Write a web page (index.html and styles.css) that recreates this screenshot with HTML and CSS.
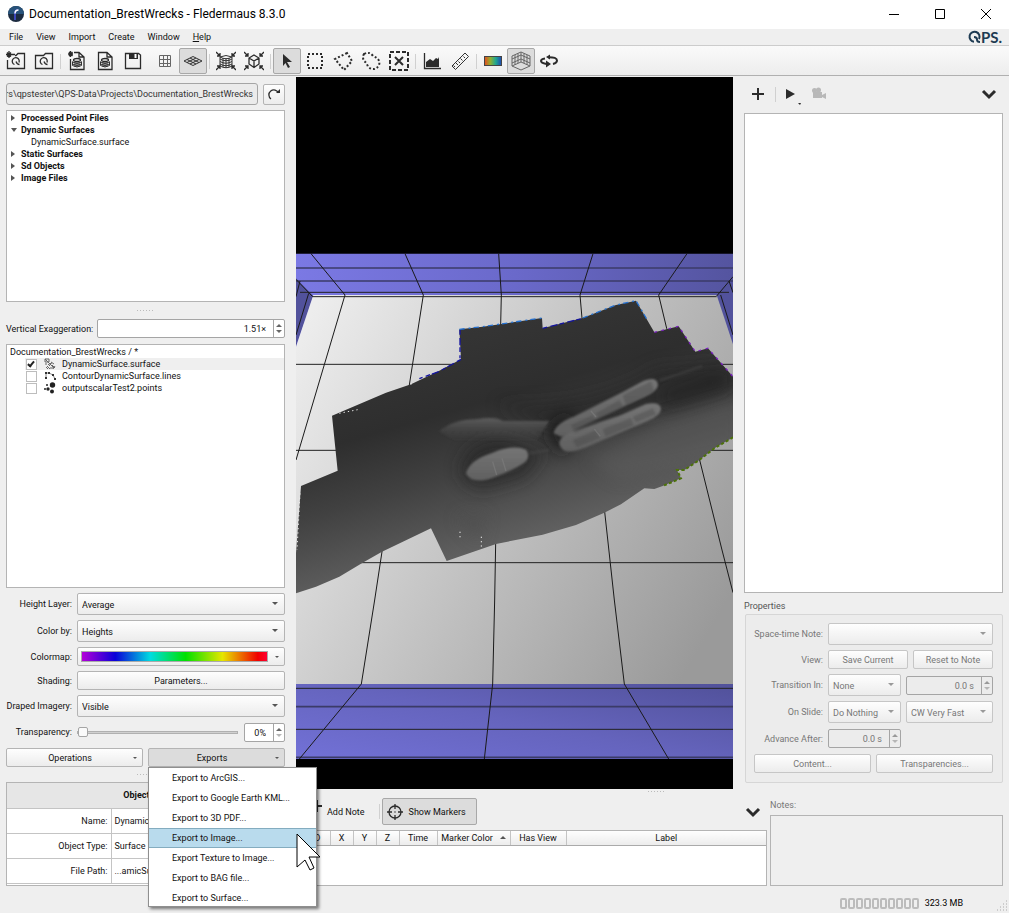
FILE: index.html
```html
<!DOCTYPE html>
<html lang="en">
<head>
    <meta charset="UTF-8">
    <meta name="viewport" content="width=device-width, initial-scale=1.0">
    <title>Documentation_BrestWrecks - Fledermaus 8.3.0</title>
    <link rel="stylesheet" href="styles.css">
</head>
<body>
    <header class="titlebar">
        <svg class="app-icon" width="16" height="16" viewBox="0 0 16 16">
            <circle cx="8" cy="8" r="8" fill="#1c2b40"/>
            <path d="M0 8a8 8 0 0 1 16 0z" fill="#27527a"/>
            <path d="M7 14V7q0-3 3-3" fill="none" stroke="#3c46b8" stroke-width="2"/>
            <path d="M7 7.500q0-3.500 3.500-3.500" fill="none" stroke="#fff" stroke-width="1.500"/>
        </svg>
        <h1>Documentation_BrestWrecks - Fledermaus 8.3.0</h1>
        <div class="window-buttons">
            <button aria-label="Minimize"><svg width="12" height="12"><path d="M1 6.500h10" stroke="#000"/></svg></button>
            <button aria-label="Maximize"><svg width="12" height="12"><path d="M1.500 1.500h9v9h-9z" fill="none" stroke="#000"/></svg></button>
            <button aria-label="Close"><svg width="12" height="12"><path d="M1 1l10 10M11 1L1 11" stroke="#000"/></svg></button>
        </div>
    </header>

    <nav class="menubar">
        <button>File</button>
        <button>View</button>
        <button>Import</button>
        <button>Create</button>
        <button>Window</button>
        <button><u>H</u>elp</button>
        <svg class="brand" width="41" height="16" viewBox="0 0 41 16">
            <path d="M6 12.700A5 5 0 1 1 11 10M6 8q3 0 3 2.500t3 2.500" fill="none" stroke="#1d3a52" stroke-width="2"/>
            <text x="13" y="14">PS.</text>
        </svg>
    </nav>

    <div class="toolbar">
        <button aria-label="New project"><svg width="20" height="20" viewBox="0 0 20 20"><path d="M6 3.500h3M9 4.500h1l2-2h6.500v15h-17V9M8.500 13.500a3.500 3.500 0 1 1 4.500-2M10 10.500q1 3 3.500 3" class="line"/><path d="M3 0v7M0 3.500h6M1 1.500l4 4M5 1.500l-4 4" class="line"/></svg></button>
        <button aria-label="Open project"><svg width="20" height="20" viewBox="0 0 20 20"><path d="M1.500 4.500h8l2-2h7v15h-17zM8.500 13.500a3.500 3.500 0 1 1 4.500-2M10 10.500q1 3 3.500 3" class="line"/></svg></button>
        <span class="sep"></span>
        <button aria-label="Create surface"><svg width="20" height="20" viewBox="0 0 20 20"><path d="M7 1.500h5l5 4.500v12.500H3.500V8M12 1.500V6h5" class="line"/><ellipse cx="10" cy="9" rx="3.500" ry="1.500" class="line"/><path d="M5.500 10.500v4q4.500 3 9 0v-4M5.500 11q4.500 3 9 0M5.500 13q4.500 3 9 0M8 11v5M10 11v5M12 11v5" class="thin dark"/><path d="M3.500 0v6M1 3h5M2 1l3.500 4M5.500 1L2 5" class="line"/></svg></button>
        <button aria-label="Import surface"><svg width="20" height="20" viewBox="0 0 20 20"><path d="M3.500 1.500H12L17 6v12.500H3.500zM12 1.500V6h5" class="line"/><ellipse cx="10" cy="9" rx="3.500" ry="1.500" class="line"/><path d="M5.500 10.500v4q4.500 3 9 0v-4M5.500 11q4.500 3 9 0M5.500 13q4.500 3 9 0M8 11v5M10 11v5M12 11v5" class="thin dark"/></svg></button>
        <button aria-label="Save"><svg width="20" height="20" viewBox="0 0 20 20"><path d="M3 2.500h12.500L17.500 4v13.500h-15V2.500z" class="line"/><path d="M6 2h9v6H6z" class="solid"/><path d="M11.500 3h2v4h-2z" fill="#fff"/></svg></button>
        <span class="space"></span>
        <button aria-label="Grid"><svg width="20" height="20" viewBox="0 0 20 20"><path d="M4.500 4.500h11v11h-11zM8.500 4.500v11M12.500 4.500v11M4.500 8.500h11M4.500 12.500h11" class="thin"/></svg></button>
        <button class="pressed" aria-label="Perspective grid"><svg width="20" height="20" viewBox="0 0 20 20"><path d="M1 10l9-4.500L19 10l-9 4.500zM4 8.500l9 4.500M7 7l9 4.500M4 11.500L13 7M7 13l9-4.500" class="thin dark"/></svg></button>
        <span class="sep"></span>
        <button aria-label="Zoom extents"><svg width="20" height="20" viewBox="0 0 20 20"><path d="M4 6q6 3.500 12 0v9q-6 3.500-12 0zM4 6q6-3 12 0M4 8q6 3.500 12 0M4 10.500q6 3.500 12 0M4 13q6 3.500 12 0M7 7v9M10 7v10M13 7v9" class="thin dark"/><path d="M0 1l4 4M20 1l-4 4M0 19l4-4M20 19l-4-4M1 5h3V2M19 5h-3V2M1 15h3v3M19 15h-3v3" class="line"/></svg></button>
        <button aria-label="Zoom to object"><svg width="20" height="20" viewBox="0 0 20 20"><path d="M10 4l5 3v6l-5 3.500L5 13V7zM5 7l5 3 5-3M10 10v6" class="line"/><path d="M0 1l4 4M20 1l-4 4M0 19l4-4M20 19l-4-4M1 5h3V2M19 5h-3V2M1 15h3v3M19 15h-3v3" class="line"/></svg></button>
        <span class="sep"></span>
        <button class="pressed" aria-label="Select"><svg width="20" height="20" viewBox="0 0 20 20"><path d="M6 3l9 8h-5l3 5-2 1-2.500-5L6 15z" class="solid"/></svg></button>
        <button aria-label="Select rectangle"><svg width="20" height="20" viewBox="0 0 20 20"><path d="M3 3h14v14H3z" class="dots"/></svg></button>
        <button aria-label="Select polygon"><svg width="20" height="20" viewBox="0 0 20 20"><path d="M14 2L2 8l9 11 8-9z" class="dots"/></svg></button>
        <button aria-label="Select lasso"><svg width="20" height="20" viewBox="0 0 20 20"><path d="M3 3q6-3 9 2 8 3 6 9-4 7-11 2-1-4-4-6-2-4 0-7z" class="dots"/></svg></button>
        <button aria-label="Clear selection"><svg width="20" height="20" viewBox="0 0 20 20"><path d="M1 1h18v18H1z" class="dots dash"/><path d="M6 6l8 8M14 6l-8 8" class="line bold"/></svg></button>
        <span class="sep"></span>
        <button aria-label="Profile"><svg width="20" height="20" viewBox="0 0 20 20"><path d="M2.500 2v15.500H19" class="line"/><path d="M4 16v-5l4-3 3 2 3-3 2 1 1-2v10z" class="solid"/></svg></button>
        <button aria-label="Measure"><svg width="20" height="20" viewBox="0 0 20 20"><path d="M2 15L15 2l3.500 3.500L5.500 18.500zM5 16l-1.500-1.500M8 14l-2-2M10 12l-1.500-1.500M12.500 9.500l-2-2M15 7l-1.500-1.500" class="thin dark"/></svg></button>
        <span class="sep"></span>
        <button aria-label="Colormap"><span class="swatch"></span></button>
        <button class="pressed" aria-label="Bounding box"><svg width="20" height="20" viewBox="0 0 20 20"><path d="M1 5l9-4 9 4v10l-9 4-9-4zM1 15l9-4 9 4M10 1v10M4 4v10M7 2.500V12M16 4v10M13 2.500V12M1 8l9-4 9 4M1 12l9-4 9 4" class="thin"/></svg></button>
        <button aria-label="Spin"><svg width="20" height="20" viewBox="0 0 20 20"><path d="M6 7.500Q2 8 2 10t5.500 3M9 6.200q9-.200 9 3.300 0 2.500-4 3.500" class="line bold"/><path d="M7 9.500v7l5-3.500zM11 3.500v5L7 6z" class="solid"/></svg></button>
    </div>

    <div class="workspace">
        <aside class="left-panel">
            <div class="path-row">
                <input class="path" type="text" aria-label="Project path" value="ers\qpstester\QPS-Data\Projects\Documentation_BrestWrecks" readonly>
                <button class="btn refresh" aria-label="Refresh"><svg width="14" height="14" viewBox="0 0 14 14"><path d="M4 12A5 5 0 1 1 11.500 6" class="line"/><path d="M9 6h4V2z" class="solid"/></svg></button>
            </div>

            <ul class="box tree project-tree">
                <li class="closed">Processed Point Files</li>
                <li class="open">Dynamic Surfaces</li>
                <li class="leaf">DynamicSurface.surface</li>
                <li class="closed">Static Surfaces</li>
                <li class="closed">Sd Objects</li>
                <li class="closed">Image Files</li>
            </ul>

            <div class="splitter"><i></i></div>

            <div class="exaggeration">
                <label for="exaggeration">Vertical Exaggeration:</label>
                <div class="spin">
                    <input type="text" id="exaggeration" value="1.51×">
                    <div class="steps"><button aria-label="Increase"></button><button class="down" aria-label="Decrease"></button></div>
                </div>
            </div>

            <div class="box tree scene-tree">
                <p>Documentation_BrestWrecks / *</p>
                <label class="layer selected"><input type="checkbox" checked>
                    <svg width="12" height="12" viewBox="0 0 12 12"><path d="M1 1h4v3H1zM1 6h2M4 6l2 2M7 4l3 2M3 8l3 3M8 7l3 3M9 11l2-3M5 6l3-1M2 9l2 2M6 10h3M1 1l9 9" stroke="#666" fill="none"/></svg>
                    DynamicSurface.surface</label>
                <label class="layer"><input type="checkbox">
                    <svg width="12" height="12" viewBox="0 0 12 12"><path d="M2 9V3h3l2 1 2 1 2 4" fill="none" stroke="#888"/><path d="M1 2h2v2H1zM4 2h2v2H4zM8 4h2v2H8zM10 8h2v2h-2zM1 7h2v2H1z" fill="#333"/></svg>
                    ContourDynamicSurface.lines</label>
                <label class="layer"><input type="checkbox">
                    <svg width="12" height="12" viewBox="0 0 12 12" fill="#222"><circle cx="8.500" cy="3" r="2.700"/><circle cx="4" cy="7" r="1.700"/><circle cx="8" cy="9.500" r="2"/><circle cx="3" cy="3" r="1"/><circle cx="1" cy="7" r="1"/></svg>
                    outputscalarTest2.points</label>
            </div>

            <div class="form">
                <label for="height">Height Layer:</label>
                <div class="combo"><select id="height"><option>Average</option></select></div>
                <label for="colorby">Color by:</label>
                <div class="combo"><select id="colorby"><option>Heights</option></select></div>
                <label for="colormap">Colormap:</label>
                <button class="btn drop colormap" id="colormap"><span class="spectrum"></span></button>
                <label for="shading">Shading:</label>
                <button class="btn" id="shading">Parameters...</button>
                <label for="draped">Draped Imagery:</label>
                <div class="combo"><select id="draped"><option>Visible</option></select></div>
                <label for="transparency">Transparency:</label>
                <div class="slide-row">
                    <input type="range" id="transparency" value="0">
                    <div class="spin">
                        <input type="text" aria-label="Transparency percent" value="0%">
                        <div class="steps"><button aria-label="Increase"></button><button class="down dim" aria-label="Decrease"></button></div>
                    </div>
                </div>
            </div>

            <div class="actions">
                <button class="btn drop">Operations</button>
                <div class="export">
                    <button class="btn drop active">Exports</button>
                    <div class="popup">
                        <button>Export to ArcGIS...</button>
                        <button>Export to Google Earth KML...</button>
                        <button>Export to 3D PDF...</button>
                        <button class="hover">Export to Image...</button>
                        <button>Export Texture to Image...</button>
                        <button>Export to BAG file...</button>
                        <button>Export to Surface...</button>
                        <svg class="cursor" width="26" height="40" viewBox="0 0 26 40"><path d="M1 1v33l8-7 5 10 4-2-5-11h11z" fill="#fff" stroke="#000"/></svg>
                    </div>
                </div>
            </div>

            <div class="splitter short"><i></i></div>

            <div class="box attributes">
                <table>
                    <colgroup><col class="c-name"><col></colgroup>
                    <thead>
                        <tr><th colspan="2">Object Info</th></tr>
                    </thead>
                    <tbody>
                        <tr><td>Name:</td><td>DynamicSurface</td></tr>
                        <tr><td>Object Type:</td><td>Surface</td></tr>
                        <tr><td>File Path:</td><td>...amicSurface</td></tr>
                    </tbody>
                </table>
            </div>
        </aside>

        <div class="main">
            <div class="upper">
                <svg class="scene" viewBox="0 -489 1311 2136" preserveAspectRatio="xMidYMid slice">
                    <defs>
                        <linearGradient id="wall" gradientUnits="userSpaceOnUse" x1="0" y1="100" x2="1311" y2="200">
                            <stop offset="0" stop-color="#7b79e4"/><stop offset=".5" stop-color="#6a69ca"/><stop offset="1" stop-color="#54549f"/>
                        </linearGradient>
                        <linearGradient id="front" gradientUnits="userSpaceOnUse" x1="0" y1="1557" x2="96" y2="1085">
                            <stop offset="0" stop-color="#7271d7"/><stop offset=".5" stop-color="#6564bd"/><stop offset="1" stop-color="#51519a"/>
                        </linearGradient>
                        <linearGradient id="floor" gradientUnits="userSpaceOnUse" x1="0" y1="300" x2="1311" y2="1050">
                            <stop offset="0" stop-color="#ededed"/><stop offset=".5" stop-color="#c3c3c3"/><stop offset="1" stop-color="#9a9a9a"/>
                        </linearGradient>
                        <linearGradient id="seabed" gradientUnits="userSpaceOnUse" x1="430" y1="250" x2="640" y2="970">
                            <stop offset="0" stop-color="#363636"/><stop offset=".35" stop-color="#2e2e2e"/><stop offset=".6" stop-color="#414141"/><stop offset="1" stop-color="#676767"/>
                        </linearGradient>
                        <linearGradient id="hull" x1="0" y1="0" x2="0" y2="1">
                            <stop offset="0" stop-color="#757575"/><stop offset="1" stop-color="#606060"/>
                        </linearGradient>
                        <linearGradient id="mound" x1="0" y1="0" x2="0" y2="1">
                            <stop offset="0" stop-color="#5d5d5d"/><stop offset=".8" stop-color="#444" stop-opacity="0"/>
                        </linearGradient>
                        <filter id="soft" x="-50%" y="-50%" width="200%" height="200%"><feGaussianBlur stdDeviation="24"/></filter>
                        <filter id="edge" x="-10%" y="-50%" width="120%" height="200%"><feGaussianBlur stdDeviation="3"/></filter>
                        <clipPath id="area"><use href="#outline"/></clipPath>
                    </defs>
                    <path d="M0-489h1311v2136H0z"/>
                    <path d="M0 41h1311v300H0z" fill="url(#wall)"/>
                    <path d="M0 115l52 53L0 320zM1311 115l-50 53 50 145z" fill="#52529c"/>
                    <path d="M52 165h1210l49 148v1019H0V320z" fill="url(#floor)"/>
                    <path d="M0 1332h1311v225H0z" fill="url(#front)"/>
                    <!-- wall and floor grid -->
                    <path d="M0 84h1311M0 123h1311M0 1400h1311M0 1552h1311" fill="none" stroke="#3b3b68" stroke-width="5"/>
                    <path d="M12 157h1287M50 170h1212M0 373h1311M0 631h1311M0 968h1311M0 1345h1311M0 1468h1311" fill="none" stroke="#222" stroke-width="3"/>
                    <path d="M45 41l102 124L0 660M327 41l55 124-42 270-82 500-22 145-40 252L10 1557M608 41l8 124-17 745-3 170-6 252-25 225M891 41l-39 124 6 70 68 580 29 265 30 252 133 225M1173 41l-85 124 24 100 99 395 67 270 33 128M0 118l50 52M12 123L0 170M38 160L0 285M1311 110l-49 58M1299 123l12 35M1274 165l37 120" fill="none" stroke="#1a1a1a" stroke-width="3"/>
                    <path id="outline" d="M490 268l70-8 178-26 2 31 120-31 100-39 60-13 55 95 73-18 50 76 38-10 75 85v182l-56 33-45 35-45 30h-22l12 25-55 23-25 9-30-2-70 48-50 25-85 37-100 29-140 28-148 51-47-98-147 70-58 33-70 42-70 30-60 20V940l15-202 110-46-17-165 162-69 75-25 85-41 65-34z" fill="url(#seabed)"/>
                    <g clip-path="url(#area)">
                        <path d="M600 490q300 10 480-110l240-20v90q-260 90-560 130z" fill="#222" opacity=".5" filter="url(#soft)"/>
                        <path d="M1100 540l240-80v180l-380 80-80-60z" fill="#666" opacity=".35" filter="url(#soft)"/>
                        <path d="M490 690q10-90 130-95l130 40-60 80-120 35q-70 0-80-60z" fill="#222" opacity=".6" filter="url(#soft)"/>
                        <path d="M745 580l70-70 20 100-40 40z" fill="#151515" opacity=".7" filter="url(#soft)"/>
                        <path d="M1090 455l170-65 60 20-30 40-180 50z" fill="#1c1c1c" opacity=".4" filter="url(#soft)"/>
                        <path d="M430 574q40-35 110-36 60-10 80 5l140 0-50 80-200 0z" fill="url(#mound)" filter="url(#edge)"/>
                        <path d="M1090 422l130-44M700 640l60-10" fill="none" stroke="#4a4a4a" stroke-width="8" opacity=".5" filter="url(#edge)"/>
                        <path d="M480 830l90-10-20 90z" fill="#4d4d4d" opacity=".5" filter="url(#soft)"/>
                    </g>
                    <g fill="url(#hull)" filter="url(#edge)">
                        <path d="M510 700q10-40 80-62 60-25 100-9 14 16 0 35-30 25-110 53-55 15-70-17z"/>
                        <path d="M773 580q5-30 60-50l140-70 70-38q40-15 43 12 0 18-40 36l-150 70-100 50z"/>
                        <path d="M790 612q0-30 60-45l120-40 80-35q42-8 45 14 0 20-42 38L870 622q-70 30-80-10z"/>
                    </g>
                    <g fill="#3f3f3f" opacity=".35" filter="url(#edge)">
                        <path d="M825 555l65-30 15 24-68 30zM900 520l70-40 12 20-75 36zM980 466l85-42 10 30-85 42z"/>
                        <path d="M830 600l70-30 12 24-70 28zM920 567l85-33 8 22-85 34zM1010 530l60-25 10 18-60 24z"/>
                    </g>
                    <path d="M885 513l15 18M895 567l18 22M590 665l12 40M618 655l12 38" stroke="#858585" stroke-width="4" opacity=".45"/>
                    <!-- coloured fringe where the surface leaves the colormap -->
                    <g fill="none" stroke-width="4">
                        <path d="M490 268l70-8 178-26M860 234l100-39 60-13 35 60" stroke="#2470d0" stroke-dasharray="16 12 6 9"/>
                        <path d="M740 265l120-30M495 358l-65 36-60 22M492 270v85" stroke="#1414a0" stroke-dasharray="14 10 22 6"/>
                        <path d="M1075 277l73-18 50 76 38-10 75 85" stroke="#7a1fc0" stroke-dasharray="8 14"/>
                        <path d="M1311 592l-56 33-45 35-45 30h-22l12 25-55 23" stroke="#4c7208" stroke-width="6" stroke-dasharray="9 7"/>
                        <path d="M130 520l60-12M556 890v35M345 430v8M492 875v18M12 760L3 930" stroke="#e8e8e8" stroke-width="3" stroke-dasharray="4 9"/>
                    </g>
                </svg>

                <aside class="right-panel">
                    <div class="slide-tools">
                        <button aria-label="Add"><svg width="14" height="14" viewBox="0 0 14 14"><path d="M7 1v12M1 7h12" class="line bold"/></svg></button>
                        <span class="sep"></span>
                        <button class="play" aria-label="Play"><svg width="20" height="20" viewBox="0 0 20 20"><path d="M6 5l9 5-9 5z" class="solid"/><path d="M18 19h3l-1 2z" class="solid"/></svg></button>
                        <button aria-label="Record" disabled><svg width="16" height="14" viewBox="0 0 16 14" fill="#b8b8b8"><circle cx="3.500" cy="3.500" r="2.500"/><circle cx="7.500" cy="3" r="2.500"/><path d="M2 5h9v6H2zM11 8l4-2v6l-4-2z"/></svg></button>
                        <button class="end" aria-label="Collapse"><svg width="16" height="14" viewBox="0 0 16 14"><path d="M2 4l6 6 6-6" class="line chevron"/></svg></button>
                    </div>
                    <div class="box slides"></div>
                    <h2>Properties</h2>
                    <fieldset class="properties" disabled>
                        <div class="prop">
                            <label for="note">Space-time Note:</label>
                            <div class="combo"><select id="note"><option></option></select></div>
                        </div>
                        <div class="prop">
                            <span>View:</span>
                            <button class="btn">Save Current</button>
                            <button class="btn">Reset to Note</button>
                        </div>
                        <div class="prop">
                            <label for="transition">Transition In:</label>
                            <div class="combo narrow"><select id="transition"><option>None</option></select></div>
                            <div class="spin">
                                <input type="text" aria-label="Transition time" value="0.0 s">
                                <div class="steps"><button aria-label="Increase"></button><button class="down dim" aria-label="Decrease"></button></div>
                            </div>
                        </div>
                        <div class="prop">
                            <label for="onslide">On Slide:</label>
                            <div class="combo narrow"><select id="onslide"><option>Do Nothing</option></select></div>
                            <div class="combo"><select aria-label="Rotation"><option>CW Very Fast</option></select></div>
                        </div>
                        <div class="prop">
                            <label for="advance">Advance After:</label>
                            <div class="spin narrow">
                                <input type="text" id="advance" value="0.0 s">
                                <div class="steps"><button aria-label="Increase"></button><button class="down dim" aria-label="Decrease"></button></div>
                            </div>
                        </div>
                        <div class="prop">
                            <button class="btn">Content...</button>
                            <button class="btn">Transparencies...</button>
                        </div>
                    </fieldset>
                </aside>
            </div>

            <div class="lower">
                <section class="markers">
                    <div class="marker-tools">
                        <button class="tool add"><svg width="14" height="14" viewBox="0 0 14 14"><path d="M6 1v12M1 7h10" class="line bold"/></svg>Add Note</button>
                        <span class="sep"></span>
                        <button class="tool pressed"><svg width="16" height="16" viewBox="0 0 16 16"><circle cx="8" cy="8" r="6" class="line"/><path d="M8 0v5M8 11v5M0 8h5M11 8h5M7.500 8h1" class="line"/></svg>Show Markers</button>
                        <i class="dots-h"></i>
                        <button class="tool end" aria-label="Collapse"><svg width="16" height="14" viewBox="0 0 16 14"><path d="M2 4l6 6 6-6" class="line chevron"/></svg></button>
                    </div>
                    <div class="box marker-list">
                        <table>
                            <colgroup><col class="c-id"><col class="c-axis"><col class="c-axis"><col class="c-axis"><col class="c-time"><col class="c-color"><col class="c-view"><col></colgroup>
                            <thead>
                                <tr><th>ID</th><th>X</th><th>Y</th><th>Z</th><th>Time</th><th class="sorted">Marker Color</th><th>Has View</th><th>Label</th></tr>
                            </thead>
                        </table>
                    </div>
                </section>
                <section class="notes">
                    <label for="notes">Notes:</label>
                    <textarea id="notes" disabled></textarea>
                </section>
            </div>
        </div>
    </div>

    <footer class="statusbar">
        <div class="meter"><i></i><i></i><i></i><i></i><i></i><i></i><i></i><i></i><i></i><i></i></div>
        <span>323.3 MB</span>
        <svg class="grip" width="12" height="12" viewBox="0 0 12 12"><path d="M9 1h1M6 4h1M9 4h1M3 7h1M6 7h1M9 7h1M0 10h1M3 10h1M6 10h1M9 10h1" stroke="#aaa"/></svg>
    </footer>
</body>
</html>
```
FILE: styles.css
```css
:root {
    --face: #efefef;
    --border: #b4b4b4;
    --button: linear-gradient(#fefefe, #ececec);
    --ink: #111;
}

* {
    box-sizing: border-box;
}

body {
    margin: 0;
    height: 100vh;
    display: flex;
    flex-direction: column;
    overflow: hidden;
    background: var(--face);
    color: var(--ink);
    font-family: Roboto, "Open Sans", sans-serif;
    font-size: 9px;
    line-height: 12px;
}

button, input, select, textarea {
    font: inherit;
    color: inherit;
    margin: 0;
    padding: 0;
}

button {
    border: none;
    background: none;
}

svg {
    flex: none;
}

.line { fill: none; stroke: #2b2b2b; stroke-width: 1.3px; }
.bold { stroke-width: 2px; }
.chevron { stroke-width: 3px; }
.thin { fill: none; stroke: #666; stroke-width: 1px; }
.dark { stroke: #333; }
.solid { fill: #2b2b2b; }
.dots { fill: none; stroke: #2b2b2b; stroke-width: 2px; stroke-dasharray: 2 2; }
.dash { stroke-dasharray: 4 2; }

.box {
    background: #fff;
    border: 1px solid var(--border);
}

/* window frame */
.titlebar {
    display: flex;
    align-items: center;
    height: 29px;
    flex: none;
    padding: 0 0 2px 8px;
    background: #fff;
}

.titlebar h1 {
    margin: 0 0 0 5px;
    font-size: 12px;
    font-weight: normal;
    color: #000;
}

.window-buttons {
    display: flex;
    margin-left: auto;
}

.window-buttons button {
    display: flex;
    justify-content: center;
    width: 46px;
    height: 12px;
}

.menubar {
    display: flex;
    align-items: center;
    height: 17px;
    flex: none;
    padding-left: 2px;
    border-bottom: 1px solid #ccc;
}

.menubar button {
    padding: 0 6px 0 7px;
}

.brand {
    margin-left: auto;
}

.brand text {
    font: bold 15px Lato, sans-serif;
    fill: #1d3a52;
}

.toolbar {
    display: flex;
    height: 30px;
    flex: none;
    padding: 2px 2px 0;
    background: linear-gradient(#fafafa, #ededed);
    border-bottom: 1px solid #b0b0b0;
}

.toolbar button {
    display: flex;
    align-items: center;
    justify-content: center;
    width: 28px;
    height: 26px;
}

.pressed {
    background: #dcdcdc;
    border: 1px solid #a8a8a8;
    border-radius: 2px;
}

.sep {
    width: 1px;
    height: 15px;
    margin: 6px 2px;
    background: #d0d0d0;
}

.space {
    width: 4px;
}

.swatch {
    width: 18px;
    height: 10px;
    border: 1px solid #444;
    background: linear-gradient(90deg, #e05020, #90b030, #20a890, #2050b0);
}

/* shared controls */
.btn {
    height: 19px;
    border: 1px solid var(--border);
    border-radius: 2px;
    background: var(--button);
}

.active {
    background: #dcdcdc;
}

.drop {
    position: relative;
}

.drop::after {
    content: "";
    position: absolute;
    right: 5px;
    top: 8px;
    border: 2px solid transparent;
    border-top-color: #555;
    border-bottom: none;
}

.combo {
    position: relative;
    display: flex;
    flex: 1;
    min-width: 0;
}

.combo::after {
    content: "";
    position: absolute;
    right: 7px;
    top: 9px;
    border: 3px solid transparent;
    border-top-color: #555;
    border-bottom: none;
}

.combo select {
    appearance: none;
    width: 100%;
    height: 22px;
    padding: 1px 0 0 4px;
    border: 1px solid var(--border);
    border-radius: 2px;
    background: var(--button);
    opacity: 1;
}

.spin {
    display: flex;
    flex: 1;
    min-width: 0;
    height: 19px;
    border: 1px solid #a5a5a5;
    border-radius: 2px;
    background: #fff;
}

.spin input {
    flex: 1;
    width: 0;
    min-width: 0;
    border: none;
    padding: 1px 7px 0 0;
    text-align: right;
    background: none;
}

.steps {
    display: flex;
    flex-direction: column;
    justify-content: center;
    gap: 3px;
    width: 11px;
    border-left: 1px solid #a5a5a5;
}

.steps button {
    width: 0;
    height: 0;
    margin: 0 auto;
    border: 3px solid transparent;
    border-top: none;
    border-bottom-color: #666;
}

.steps .down {
    border-top: 3px solid #666;
    border-bottom: none;
}

.steps .dim {
    border-top-color: #b5b5b5;
}

.splitter {
    display: flex;
    justify-content: center;
    align-items: center;
    height: 17px;
    flex: none;
}

.splitter i, .dots-h {
    width: 17px;
    height: 1px;
    background: repeating-linear-gradient(90deg, #bbb 0 1px, transparent 1px 3px);
}

.dots-h {
    align-self: flex-start;
    margin: -7px 0 0 171px;
}

/* left panel */
.workspace {
    display: flex;
    flex: 1;
    min-height: 0;
    padding-top: 1px;
}

.left-panel {
    display: flex;
    flex-direction: column;
    width: 296px;
    flex: none;
    padding: 6px 11px 4px 6px;
}

.path-row {
    display: flex;
    align-items: center;
    gap: 5px;
    margin-bottom: 5px;
}

/* keeps the end of a long path in view */
.path {
    flex: 1;
    min-width: 0;
    height: 22px;
    padding-right: 4px;
    border: 1px solid #a5a5a5;
    border-radius: 3px;
    background: #ebebeb;
    color: #333;
    direction: rtl;
}

.refresh {
    display: flex;
    align-items: center;
    justify-content: center;
    width: 22px;
    height: 21px;
}

.tree {
    min-height: 0;
    margin: 0;
    padding: 1px 0;
}

.project-tree {
    flex: 192 1 0;
    list-style: none;
    font-weight: bold;
}

.project-tree li {
    display: flex;
    align-items: center;
    padding-left: 4px;
}

.project-tree .leaf {
    padding-left: 24px;
    font-weight: normal;
}

.closed::before, .open::before {
    content: "";
    margin: 0 6px 0 0;
    border: 3px solid transparent;
    border-left: 4px solid #555;
    border-right: none;
}

.open::before {
    margin: 0 4px 0 0;
    border: 3px solid transparent;
    border-top: 4px solid #555;
    border-bottom: none;
}

.exaggeration {
    display: flex;
    align-items: center;
    gap: 4px;
    margin-bottom: 6px;
}

.scene-tree {
    flex: 244 1 0;
    margin-bottom: 5px;
}

.scene-tree p {
    margin: 0;
    padding-left: 3px;
}

.layer {
    display: flex;
    align-items: center;
    height: 12px;
    padding-left: 19px;
}

.layer svg {
    margin: 0 6px 0 7px;
}

.layer.selected {
    background: linear-gradient(90deg, transparent 18px, #efefef 18px);
}

.layer input {
    appearance: none;
    width: 11px;
    height: 11px;
    border: 1px solid #bdbdbd;
    background: #fff;
}

.layer input:checked::before {
    content: "";
    display: block;
    width: 2px;
    height: 5px;
    margin: 0 2px;
    border: solid #222;
    border-width: 0 2px 2px 0;
    transform: rotate(40deg);
}

.form {
    display: grid;
    grid-template-columns: 66px 1fr;
    gap: 5px;
    align-items: center;
    text-align: right;
    white-space: nowrap;
    margin-bottom: 6px;
}

.colormap {
    display: flex;
    align-items: center;
    padding: 0 16px 0 3px;
}

.spectrum {
    flex: 1;
    height: 11px;
    border: 1px solid #aaa;
    background: linear-gradient(90deg, #b400d8, #0a00d8 18%, #00dce0 37%, #00e000 56%, #e6e600 76%, #f00000 95%, #ff0030);
}

.slide-row {
    display: flex;
    align-items: center;
    gap: 6px;
    height: 20px;
}

.slide-row input[type="range"] {
    appearance: none;
    flex: 1;
    min-width: 0;
    height: 3px;
    border: 1px solid #b0b0b0;
    background: #d0d0d0;
}

.slide-row input[type="range"]::-webkit-slider-thumb {
    appearance: none;
    width: 10px;
    height: 10px;
    border: 1px solid #a5a5a5;
    border-radius: 2px;
    background: #fafafa;
}

.slide-row .spin {
    flex: none;
    width: 41px;
}

.actions {
    display: grid;
    grid-template-columns: 1fr 1fr;
    gap: 5px;
}

.export {
    position: relative;
}

.actions .btn {
    width: 100%;
    padding-right: 9px;
}

.popup {
    position: absolute;
    z-index: 2;
    top: 19px;
    left: 0;
    width: 169px;
    height: 140px;
    border: 1px solid #8f8f8f;
    background: #fff;
    box-shadow: 2px 2px 3px rgba(0, 0, 0, 0.5);
}

.popup button {
    display: block;
    width: 100%;
    height: 20px;
    padding-left: 23px;
    text-align: left;
}

.popup .hover {
    background: #b9dbed;
    border: solid #84acbf;
    border-width: 1px 0;
}

.cursor {
    position: absolute;
    top: 65px;
    left: 147px;
}

.splitter.short {
    height: 15px;
}

.attributes {
    height: 104px;
    flex: none;
    overflow: hidden;
}

table {
    width: 100%;
    table-layout: fixed;
    border-collapse: collapse;
    white-space: nowrap;
}

.attributes th {
    height: 25px;
    padding: 0;
    background: #e6e6e6;
    border-bottom: 1px solid #c4c4c4;
}

.attributes td {
    height: 25px;
    padding: 0 3px;
    overflow: hidden;
    border-bottom: 1px solid #c4c4c4;
}

.attributes td:first-child {
    text-align: right;
    border-right: 1px solid #c4c4c4;
}

.c-name { width: 104px; }

/* centre and right */
.main {
    display: flex;
    flex-direction: column;
    flex: 1;
    min-width: 0;
}

.upper {
    display: flex;
    flex: 1;
    min-height: 0;
}

.scene {
    flex: 1;
    min-width: 0;
    height: 100%;
}

.right-panel {
    display: flex;
    flex-direction: column;
    width: 276px;
    flex: none;
    padding: 0 6px 6px 11px;
}

.slide-tools {
    display: flex;
    align-items: center;
    height: 36px;
    flex: none;
    padding: 0 0 2px 7px;
}

.slide-tools button {
    display: flex;
}

.slide-tools .sep {
    margin: 0 4px 0 10px;
}

.slide-tools svg {
    overflow: visible;
}

.play {
    margin-right: 11px;
}

.end {
    margin-left: auto;
}

.slide-tools .end {
    margin-right: 6px;
}

.slides {
    flex: 1;
}

.right-panel h2 {
    margin: 7px 0 2px;
    font-size: 9px;
    font-weight: normal;
    color: #555;
}

.properties {
    display: flex;
    flex-direction: column;
    gap: 5px;
    min-width: 0;
    margin: 0 0 0 1px;
    padding: 8px 9px 9px 8px;
    border: 1px solid #d6d6d6;
    border-radius: 2px;
    background: #ececec;
    color: #777;
    white-space: nowrap;
}

.prop {
    display: flex;
    align-items: center;
    gap: 5px;
}

.prop > label, .prop > span {
    width: 69px;
    text-align: right;
}

.prop .btn {
    flex: 1;
    min-width: 0;
    border-color: #c6c6c6;
}

.prop select {
    border-color: #c6c6c6;
}

.prop .combo::after {
    border-top-color: #999;
}

.prop .spin {
    background: none;
}

.prop .narrow {
    flex: none;
    width: 73px;
}

.prop .steps button {
    border-bottom-color: #999;
}

.prop:nth-child(n+5) {
    margin-top: 1px;
}

.lower {
    display: flex;
    gap: 3px;
    padding: 9px 6px 4px;
}

.markers {
    flex: 1;
    min-width: 0;
}

.marker-tools {
    display: flex;
    align-items: center;
    height: 27px;
    margin-bottom: 5px;
}

.tool {
    display: flex;
    align-items: center;
    gap: 6px;
    height: 27px;
    padding: 0 10px 0 4px;
}

.tool.add {
    gap: 2px;
    padding: 0 12px 0 9px;
}

.tool.add svg {
    margin-bottom: 12px;
}

.tool.end {
    padding-right: 6px;
}

.marker-list {
    height: 56px;
}

.marker-list th {
    height: 14px;
    padding: 0;
    font-weight: normal;
    background: var(--button);
    border-right: 1px solid #c4c4c4;
    border-bottom: 1px solid #aaa;
}

.marker-list th:last-child {
    border-right: none;
}

.c-id { width: 27px; }
.c-axis { width: 23px; }
.c-time { width: 38px; }
.c-color { width: 73px; }
.c-view { width: 56px; }

.sorted::after {
    content: "";
    display: inline-block;
    margin-left: 7px;
    vertical-align: 2px;
    border: 3px solid transparent;
    border-top: none;
    border-bottom-color: #555;
}

.notes {
    display: flex;
    flex-direction: column;
    gap: 4px;
    width: 233px;
    padding-top: 1px;
    color: #777;
}

.notes textarea {
    flex: 1;
    width: 100%;
    border: 1px solid var(--border);
    background: var(--face);
    resize: none;
}

.statusbar {
    display: flex;
    align-items: center;
    justify-content: flex-end;
    height: 23px;
    flex: none;
    padding-top: 3px;
    color: #000;
}

.meter {
    display: flex;
    gap: 1px;
    margin-right: 6px;
}

.meter i {
    width: 7px;
    height: 11px;
    border: 2px solid #bcbcbc;
    border-radius: 2px;
}

.grip {
    margin: 6px 0 0 34px;
}
```
